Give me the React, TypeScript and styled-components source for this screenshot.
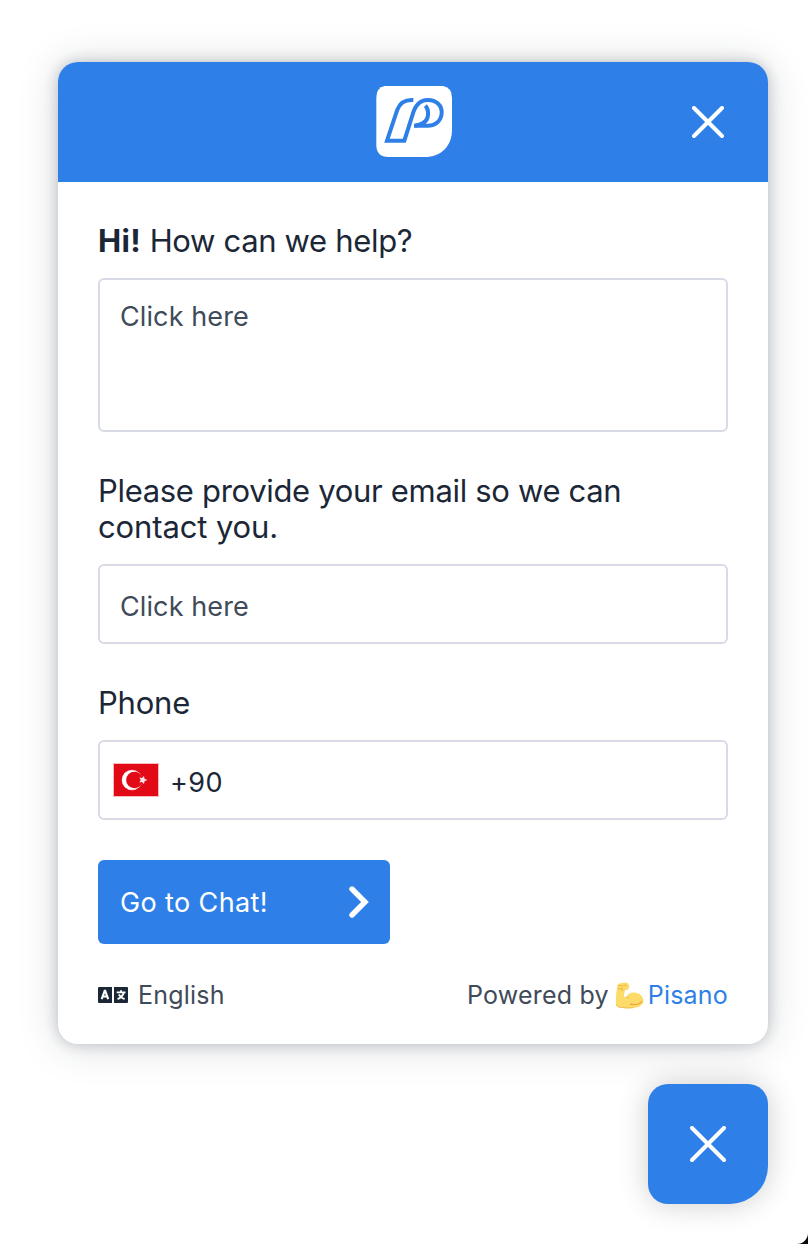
import React from 'react';
import styled, { createGlobalStyle } from 'styled-components';

const GlobalStyle = createGlobalStyle`
  *, *::before, *::after { box-sizing: border-box; }
  body { margin: 0; background: #05070c; font-family: Inter, "Liberation Sans", sans-serif; }
  button, input, textarea { font: inherit; letter-spacing: inherit; }
`;

const blue = '#2e7fe8';
const ink = '#1b2737';
const muted = '#404b5a';

const Page = styled.main`
  width: 808px;
  height: 1244px;
  padding: 62px 40px 40px 58px;
  display: flex;
  flex-direction: column;
  align-items: flex-end;
  gap: 40px;
  overflow: hidden;
  background: #fff;
  border-radius: 0 0 11px 0;
  color: ${ink};
`;

const Widget = styled.section`
  width: 710px;
  height: 982px;
  flex: none;
  border-radius: 20px;
  background: #fff;
  overflow: hidden;
  box-shadow: 0 0 14px rgba(27, 39, 55, 0.24), 0 2px 40px rgba(27, 39, 55, 0.17);
`;

const Header = styled.header`
  height: 120px;
  padding: 0 40px;
  display: grid;
  grid-template-columns: 40px 1fr 40px;
  align-items: center;
  justify-items: center;
  background: ${blue};
`;

const IconButton = styled.button`
  grid-column: 3;
  width: 40px;
  height: 40px;
  padding: 0;
  border: 0;
  background: none;
  display: grid;
  place-items: center;
`;

const LogoSlot = styled.div`
  grid-column: 2;
  display: flex;
  padding-left: 1px;
`;

const Form = styled.form`
  padding: 41px 40px 0;
  display: flex;
  flex-direction: column;
`;

const Label = styled.label`
  display: block;
  margin-bottom: 19px;
  font-size: 31px;
  line-height: 36px;
`;

const Tracked = styled.span<{ $spacing: number }>`
  letter-spacing: ${(p) => p.$spacing}px;
`;

const Hi = styled.strong`
  font-weight: 700;
  letter-spacing: 0.4px;
`;

const fieldFrame = `
  width: 630px;
  border: 2px solid #d8dbe6;
  border-radius: 6px;
  background: #fff;
  outline: none;
  font-size: 27px;
  color: ${ink};
  letter-spacing: 0.1px;
  &::placeholder { color: ${muted}; opacity: 1; }
`;

const MessageField = styled.textarea`
  ${fieldFrame}
  display: block;
  height: 154px;
  padding: 19px 20px;
  margin-bottom: 41px;
  line-height: 36px;
  resize: none;
`;

const TextField = styled.input`
  ${fieldFrame}
  height: 80px;
  padding: 4px 20px 0;
  margin-bottom: 41px;
`;

const PhoneField = styled.div`
  ${fieldFrame}
  height: 80px;
  padding-left: 13px;
  margin-bottom: 40px;
  display: flex;
  align-items: center;
  gap: 11px;
  letter-spacing: 0.4px;
`;

const PhoneInput = styled.input`
  flex: 1;
  min-width: 0;
  border: 0;
  padding: 4px 0 0;
  outline: none;
  background: none;
  color: ${ink};
`;

const SubmitButton = styled.button`
  width: 292px;
  height: 84px;
  padding: 0 21px 0 22px;
  border: 0;
  border-radius: 6px;
  display: flex;
  align-items: center;
  justify-content: space-between;
  background: ${blue};
  color: #fff;
  font-size: 27px;
  letter-spacing: 0.38px;
`;

const Footer = styled.footer`
  padding: 33px 40px 0;
  display: flex;
  justify-content: space-between;
  align-items: center;
  font-size: 25px;
  line-height: 36px;
  letter-spacing: 0.2px;
  color: ${muted};
`;

const FooterGroup = styled.div<{ $gap: number }>`
  display: flex;
  align-items: center;
  gap: ${(p) => p.$gap}px;
`;

const BrandLink = styled.a`
  color: ${blue};
  margin-left: -2px;
`;

const Launcher = styled.button`
  width: 120px;
  height: 120px;
  flex: none;
  padding: 0;
  border: 0;
  border-radius: 20px 20px 38px 20px;
  display: grid;
  place-items: center;
  background: ${blue};
  box-shadow: 0 0 30px rgba(0, 0, 0, 0.2);
`;

const CloseIcon = ({ size }: { size: number }) => (
  <svg width={size} height={size} viewBox={`0 0 ${size} ${size}`} fill="none" stroke="#fff" strokeWidth="4" strokeLinecap="round">
    <path d={`M2 2 ${size - 2} ${size - 2}M${size - 2} 2 2 ${size - 2}`} />
  </svg>
);

const Logo = () => (
  <svg width="76" height="72" viewBox="47 49 228 216" fill="none">
    <path d="M84 48H238Q275 48 275 85V180C275 229 242 262 193 262H84Q48 262 48 226V84Q48 48 84 48Z" fill="#fff" />
    <g stroke={blue} strokeWidth="12">
      <path d="M159 91C133 89 119 99 111 120L80 213H132L157 134C165 106 178 91 202 91C229 91 245 108 244 130C243 153 226 168 202 168H161" />
      <path d="M164 168C190 164 205 151 203 128C203 119 200 113 195 108" />
    </g>
  </svg>
);

const Flag = () => (
  <svg width="46" height="34" viewBox="0 0 46 34">
    <rect width="46" height="34" fill="#f9b9bd" />
    <rect x="1" y="1" width="44" height="32" fill="#e30a17" />
    <circle cx="19" cy="17" r="10.3" fill="#f9c9cb" />
    <circle cx="18.6" cy="17" r="9.5" fill="#fff" />
    <circle cx="21.4" cy="17" r="8.3" fill="#e30a17" />
    <path d="m34.5 17-3 1.2-.5 2.7-2-2-2.7.5 1.4-2.4-1.4-2.4 2.7.5 2-2 .5 2.7z" fill="#fde5e6" />
  </svg>
);

const ChevronIcon = () => (
  <svg width="20" height="34" viewBox="0 0 20 34" fill="none" stroke="#fff" strokeWidth="5.4" strokeLinecap="round">
    <path d="M3 4 16 17 3 30" />
  </svg>
);

const LanguageIcon = () => (
  <svg width="30" height="16" viewBox="0 0 30 16" fill="none">
    <path d="M1 0H14V16H1Q0 16 0 15V1Q0 0 1 0ZM16 0H29Q30 0 30 1V15Q30 16 29 16H16Z" fill={ink} />
    <path d="m3.7 12.2 3-8.4h.5l3 8.4M4.8 9.5h4.4" stroke="#fff" strokeWidth="2.1" />
    <path d="M18.7 5.4h8.8M23 3.2v2M25.8 5.6c-.8 3-3.1 5.4-6.2 6.6M20.8 7.4c1.3 2.2 3 3.8 5.8 4.8" stroke="#fff" strokeWidth="1.9" />
  </svg>
);

const BicepsIcon = () => (
  <svg width="29" height="27" viewBox="0 0 29 27">
    <path d="M2.2 4.2C3 1.5 5 .8 7.2 1.1c2-.8 4.4-1 5.8.4 1.2 1.3 1.5 3.5.6 5.2-.5 1-1.7 1.5-3.5 1.4L8.8 14c.5.8 1.2 1.3 2.2 1.1 1.4-3 4.5-4.8 8-4.6 5.4.2 9.5 3.7 9.4 8.2-.1 4.3-4.3 6.8-10.1 7.3-5.2.5-9.4.5-14.2-.8C1.4 24.6.8 22.5.9 20 1 14 1.3 9 2.2 4.2Z" fill="#fddb68" />
    <path d="M3 4c1.7-1 3.2-.7 4.5.5 1-1.6 3-1.6 4.3-.8M3.2 6.3c1.2.8 2.5.8 3.7 0 1.5.7 1.4 2-.5 2.2" fill="none" stroke="#eeb044" strokeWidth="1" />
    <path d="M11 15.1c1.4.1 2.8.9 3.4 2" fill="none" stroke="#f2bc4f" strokeWidth="1" />
    <path d="M15 22.2c4.6 1 9.3.5 12.4-2.8" fill="none" stroke="#eaa63d" strokeWidth="1.3" />
    <path d="M1.2 22c.4 1.7 1.4 2.8 3.2 3.1 4 .8 9 1 14 .6" fill="none" stroke="#f2bd52" strokeWidth="1" />
  </svg>
);

export default function App() {
  return (
    <>
      <GlobalStyle />
      <Page>
        <Widget>
          <Header>
            <LogoSlot><Logo /></LogoSlot>
            <IconButton aria-label="Close"><CloseIcon size={32} /></IconButton>
          </Header>
          <Form>
            <Label htmlFor="message">
              <Hi>Hi!</Hi>
              <Tracked $spacing={-0.33}> How can we help?</Tracked>
            </Label>
            <MessageField id="message" placeholder="Click here" />
            <Label htmlFor="email">
              <Tracked $spacing={-0.32}>Please provide your email so we can</Tracked>
              <br />
              <Tracked $spacing={-0.12}>contact you.</Tracked>
            </Label>
            <TextField id="email" placeholder="Click here" />
            <Label htmlFor="phone"><Tracked $spacing={-0.2}>Phone</Tracked></Label>
            <PhoneField>
              <Flag />
              <PhoneInput id="phone" defaultValue="+90" />
            </PhoneField>
            <SubmitButton type="button">
              <span>Go to Chat!</span>
              <ChevronIcon />
            </SubmitButton>
          </Form>
          <Footer>
            <FooterGroup $gap={10}>
              <LanguageIcon />
              <span>English</span>
            </FooterGroup>
            <FooterGroup $gap={6}>
              <span>Powered by</span>
              <BicepsIcon />
              <BrandLink>Pisano</BrandLink>
            </FooterGroup>
          </Footer>
        </Widget>
        <Launcher aria-label="Close chat"><CloseIcon size={36} /></Launcher>
      </Page>
    </>
  );
}
